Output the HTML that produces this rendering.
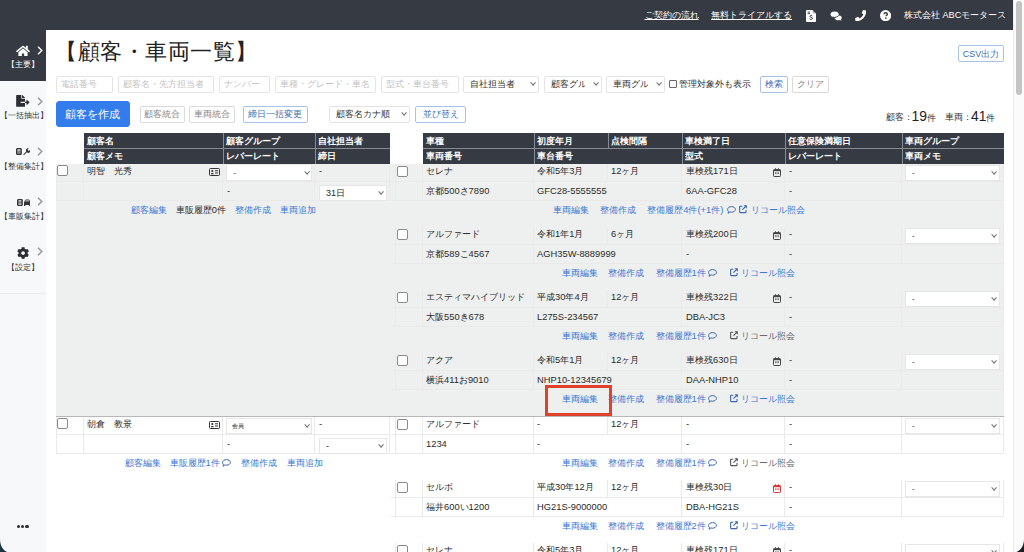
<!DOCTYPE html><html><head><meta charset="utf-8"><style>
*{margin:0;padding:0;box-sizing:border-box}
html,body{width:1024px;height:552px;overflow:hidden;background:#fff}
body{font-family:"Liberation Sans",sans-serif;color:#2a2a2a;position:relative}
.ab{position:absolute}
.t{position:absolute;white-space:nowrap;font-size:9px;line-height:12px;transform:translateY(-6px)}
.c{transform:translate(-50%,-6px)}
.hd{color:#fff;font-weight:bold;font-size:9.2px}
.l{font-size:1.04em}
.lk{color:#3a78d4}
.gr{color:#666}
.cb{position:absolute;width:11px;height:11px;border:1px solid #8a8a8a;border-radius:2px;background:#fff}
.sel{position:absolute;background:#fff;border:1px solid #e6e6e6;}
.sel span{position:absolute;left:6px;right:16px;overflow:hidden;top:50%;transform:translateY(-50%);font-size:9px;line-height:12px;white-space:nowrap}
.sel i{position:absolute;right:2.6px;top:50%;width:4.2px;height:4.2px;border-right:.9px solid #707070;border-bottom:.9px solid #707070;transform:translateY(-75%) rotate(45deg)}
.btn{position:absolute;border:1px solid #dadada;border-radius:2px;background:#fff;font-size:9px;line-height:12px;color:#888;display:flex;align-items:center;justify-content:center;white-space:nowrap}
.bb{border-color:#a9c3e6;color:#3d6fb5}
.inp{position:absolute;border:1px solid #e4e4e4;border-radius:2px;background:#fff;font-size:9px;color:#c4c4c4;padding-left:4px;display:flex;align-items:center;white-space:nowrap;overflow:hidden}
</style></head><body>
<div class="ab" style="left:0px;top:0px;width:1012.5px;height:30px;background:#363a42"></div>
<div class="t" style="left:644.5px;top:15px;color:#fff;font-size:9px"><u>ご契約の流れ</u></div>
<div class="t" style="left:711px;top:15px;color:#fff;font-size:9px"><u>無料トライアルする</u></div>
<div class="t" style="left:904px;top:15px;color:#fff;font-size:8.8px">株式会社 <span class="l">ABC</span>モータース</div>
<svg class="ab" style="left:806px;top:9.5px" width="10" height="12" viewBox="0 0 10 12"><path d="M0 .8A.8.8 0 0 1 .8 0H6.5L10 3.5v7.7a.8.8 0 0 1-.8.8H.8a.8.8 0 0 1-.8-.8z" fill="#fff"/><path d="M6.5 0v3.5H10" fill="#363a42" opacity=".35"/><rect x="1.6" y="1.6" width="2.4" height=".9" fill="#363a42"/><rect x="1.6" y="3.2" width="2.4" height=".9" fill="#363a42"/><path d="M6.4 6.1c-.3-.4-.8-.6-1.3-.6-.7 0-1.2.4-1.2.9 0 1.1 2.6.7 2.6 1.9 0 .6-.6 1-1.4 1-.6 0-1.1-.2-1.5-.6M5 4.8v.8m0 3.7v.8" fill="none" stroke="#363a42" stroke-width=".9"/></svg>
<svg class="ab" style="left:830px;top:10.5px" width="12" height="10" viewBox="0 0 12 10"><path d="M8.2 4.2c2 0 3.6 1.1 3.6 2.5 0 .6-.3 1.2-.8 1.6l.5 1.5-1.8-.8c-.5.2-1 .3-1.5.3-2 0-3.6-1.1-3.6-2.6s1.6-2.5 3.6-2.5z" fill="#fff"/><path d="M4.6 0C7.1 0 9.2 1.4 9.2 3.2S7.1 6.4 4.6 6.4c-.6 0-1.2-.1-1.7-.3L.7 7.1l.7-1.7C.5 4.8 0 4 0 3.2 0 1.4 2.1 0 4.6 0z" fill="#fff" stroke="#363a42" stroke-width="1"/></svg>
<svg class="ab" style="left:854.5px;top:9.7px" width="11.3" height="11.3" viewBox="0 0 512 512"><path d="M493.4 24.6l-104-24c-11.3-2.6-22.9 3.3-27.5 13.9l-48 112c-4.2 9.8-1.4 21.3 6.9 28l60.6 49.6c-36 76.7-98.9 140.5-177.2 177.2l-49.6-60.6c-6.8-8.300-18.2-11.1-28-6.9l-112 48C3.9 366.5-2 378.1.6 389.4l24 104C27.1 504.2 36.7 512 48 512c256.1 0 464-207.5 464-464 0-11.2-7.7-20.9-18.6-23.4z" fill="#fff"/></svg>
<svg class="ab" style="left:879.8px;top:10.2px" width="11.2" height="11.2" viewBox="0 0 12 12"><circle cx="6" cy="6" r="6" fill="#fff"/><path d="M4.3 4.6c0-1 .8-1.6 1.8-1.6s1.8.6 1.8 1.5c0 1.2-1.5 1.2-1.5 2.3" fill="none" stroke="#363a42" stroke-width="1.5"/><circle cx="6.3" cy="8.7" r=".9" fill="#363a42"/></svg>
<div class="ab" style="left:1012.5px;top:0px;width:11.5px;height:552px;background:#fbfbfb;border-left:1px solid #efefef"></div>
<div class="ab" style="left:1015.7px;top:1.3px;width:6.6px;height:93.7px;background:#c4c4c4;border-radius:3.3px"></div>
<div class="ab" style="left:0px;top:30px;width:46px;height:522px;background:#f7f8fa"></div>
<div class="ab" style="left:0px;top:292.5px;width:46px;height:1px;background:#e9eaec"></div>
<div class="ab" style="left:0px;top:30px;width:46px;height:51px;background:#363a42"></div>
<svg class="ab" style="left:16px;top:44.5px" width="14" height="11.5" viewBox="0 0 576 480"><path d="M280.37 148.26L96 300.11V464a16 16 0 0 0 16 16l112.06-.29a16 16 0 0 0 15.920-16V368a16 16 0 0 1 16-16h64a16 16 0 0 1 16 16v95.64a16 16 0 0 0 16 16.050L464 480a16 16 0 0 0 16-16V300L295.67 148.26a12.19 12.19 0 0 0-15.300 0zM571.6 251.47L488 182.56V44.05a12 12 0 0 0-12-12h-56a12 12 0 0 0-12 12v72.61L318.47 43a48 48 0 0 0-61 0L4.34 251.47a12 12 0 0 0-1.6 16.9l25.5 31A12 12 0 0 0 45.15 301l235.22-193.74a12.19 12.19 0 0 1 15.3 0L530.9 301a12 12 0 0 0 16.9-1.6l25.5-31a12 12 0 0 0-1.7-16.93z" fill="#fff"/></svg>
<svg class="ab" style="left:37px;top:45.5px" width="6" height="9" viewBox="0 0 6 9"><path d="M1 .7 4.8 4.5 1 8.3" stroke="#fff" stroke-width="1.4" fill="none"/></svg>
<div class="t" style="left:7px;top:64px;color:#fff;font-size:8.4px">【主要】</div>
<svg class="ab" style="left:16.3px;top:95px" width="13.6" height="11.8" viewBox="0 0 576 512"><path d="M384 121.9c0-6.3-2.5-12.4-7-16.9L279.1 7c-4.5-4.5-10.6-7-17-7H256v128h128zM571 308l-95.7-96.4c-10.1-10.1-27.4-3-27.4 11.3V288h-64v64h64v65.2c0 14.3 17.3 21.4 27.4 11.3L571 332c6.6-6.6 6.6-17.4 0-24zm-379 28v-32c0-8.8 7.2-16 16-16h176V160H248c-13.2 0-24-10.8-24-24V0H24C10.7 0 0 10.7 0 24v464c0 13.3 10.7 24 24 24h336c13.3 0 24-10.7 24-24V352H208c-8.8 0-16-7.2-16-16z" fill="#2b2e33"/></svg>
<svg class="ab" style="left:37px;top:96.5px" width="6" height="9" viewBox="0 0 6 9"><path d="M1 .7 4.8 4.5 1 8.3" stroke="#999" stroke-width="1.5" fill="none"/></svg>
<div class="t" style="left:0px;top:114.5px;font-size:8.4px;color:#333">【一括抽出】</div>
<svg class="ab" style="left:16.3px;top:148px" width="13.6" height="7" viewBox="0 0 13.6 7"><rect x=".6" y=".6" width="4.6" height="5.8" rx=".7" fill="#888" stroke="#333" stroke-width="1.2"/><rect x="1.6" y="1.4" width="2.6" height="1.2" fill="#ddd"/><path d="M7.2 6.6 10.3 3.4A1.9 1.9 0 0 1 12.7.6l-1.1 1.1.5.9.9.4 1-1A1.9 1.9 0 0 1 11 4.3L8 7z" fill="#333"/></svg>
<svg class="ab" style="left:37px;top:146.5px" width="6" height="9" viewBox="0 0 6 9"><path d="M1 .7 4.8 4.5 1 8.3" stroke="#999" stroke-width="1.5" fill="none"/></svg>
<div class="t" style="left:0px;top:166px;font-size:8.4px;color:#333">【整備集計】</div>
<svg class="ab" style="left:16.5px;top:198.8px" width="13.5" height="7" viewBox="0 0 13.5 7"><rect x=".6" y=".6" width="4.6" height="5.8" rx=".7" fill="#777" stroke="#333" stroke-width="1.2"/><rect x="1.6" y="1.4" width="2.6" height="1" fill="#eee"/><rect x="1.6" y="4.6" width="2.6" height="1" fill="#eee"/><path d="M7 7V3.6L8 1.2C8.2.6 8.6.4 9.2.4h2.3c.6 0 1 .2 1.2.8l.8 2.4V7h-1.4V6H8.4v1z" fill="#333"/><rect x="8.4" y="1.3" width="3.8" height="1.1" fill="#ccc"/></svg>
<svg class="ab" style="left:37px;top:196.5px" width="6" height="9" viewBox="0 0 6 9"><path d="M1 .7 4.8 4.5 1 8.3" stroke="#999" stroke-width="1.5" fill="none"/></svg>
<div class="t" style="left:0px;top:216px;font-size:8.4px;color:#333">【車販集計】</div>
<svg class="ab" style="left:16.8px;top:246.8px" width="12.2" height="12.2" viewBox="0 0 512 512"><path d="M487.4 315.7l-42.6-24.6c4.3-23.2 4.3-47 0-70.2l42.6-24.6c4.9-2.8 7.1-8.6 5.5-14-11.1-35.6-30-67.8-54.7-94.6-3.8-4.1-10-5.1-14.8-2.3L380.8 110c-17.9-15.4-38.5-27.3-60.8-35.1V25.8c0-5.6-3.9-10.5-9.4-11.7-36.7-8.2-74.3-7.8-109.2 0-5.5 1.2-9.4 6.1-9.4 11.7V75c-22.2 7.9-42.8 19.8-60.8 35.1L88.7 85.5c-4.9-2.8-11-1.9-14.8 2.3-24.7 26.7-43.6 58.9-54.7 94.6-1.7 5.4.6 11.2 5.5 14L67.3 221c-4.3 23.2-4.3 47 0 70.2l-42.6 24.6c-4.9 2.8-7.1 8.6-5.5 14 11.1 35.6 30 67.8 54.7 94.6 3.8 4.1 10 5.1 14.8 2.3l42.6-24.6c17.9 15.4 38.5 27.3 60.8 35.1v49.2c0 5.6 3.9 10.5 9.4 11.7 36.7 8.2 74.3 7.8 109.2 0 5.5-1.2 9.4-6.1 9.4-11.7v-49.2c22.2-7.9 42.8-19.8 60.8-35.1l42.6 24.6c4.9 2.8 11 1.9 14.8-2.3 24.7-26.7 43.6-58.9 54.7-94.6 1.5-5.5-.7-11.3-5.6-14.1zM256 336c-44.1 0-80-35.9-80-80s35.9-80 80-80 80 35.9 80 80-35.9 80-80 80z" fill="#2b2e33"/></svg>
<svg class="ab" style="left:37px;top:247px" width="6" height="9" viewBox="0 0 6 9"><path d="M1 .7 4.8 4.5 1 8.3" stroke="#999" stroke-width="1.5" fill="none"/></svg>
<div class="t" style="left:7px;top:267px;font-size:8.4px;color:#333">【設定】</div>
<div class="ab" style="left:16.8px;top:524.7px;width:3.4px;height:3.4px;background:#2b2e33;border-radius:50%"></div>
<div class="ab" style="left:21.1px;top:524.7px;width:3.4px;height:3.4px;background:#2b2e33;border-radius:50%"></div>
<div class="ab" style="left:25.4px;top:524.7px;width:3.4px;height:3.4px;background:#2b2e33;border-radius:50%"></div>
<svg class="ab" style="left:0;top:539px" width="8" height="13" viewBox="0 0 8 13"><path d="M0 0C0 6 2.5 11 7 13H0z" fill="#1f3640"/></svg>
<svg class="ab" style="left:1014px;top:539px" width="10" height="13" viewBox="0 0 10 13"><path d="M10 0C10 6 7.5 11 2.5 13H10z" fill="#1b1e22"/></svg>
<div class="t" style="left:55px;top:52px;letter-spacing:0.55px;font-size:22.4px;line-height:26px;transform:translateY(-13px);color:#222">【顧客・車両一覧】</div>
<div class="btn bb" style="left:958px;top:45px;width:46px;height:17px;font-size:9px">CSV出力</div>
<div class="inp" style="left:56px;top:75.5px;width:57px;height:17px">電話番号</div>
<div class="inp" style="left:118px;top:75.5px;width:96px;height:17px">顧客名・先方担当者</div>
<div class="inp" style="left:219px;top:75.5px;width:51px;height:17px">ナンバー</div>
<div class="inp" style="left:274.5px;top:75.5px;width:101.5px;height:17px">車種・グレード・車名</div>
<div class="inp" style="left:381px;top:75.5px;width:78px;height:17px">型式・車台番号</div>
<div class="sel" style="left:462.5px;top:75.5px;width:76px;height:17px;border-color:#e4e4e4;border-radius:2px"><span style="color:#333">自社担当者</span><i></i></div>
<div class="sel" style="left:543.5px;top:75.5px;width:58px;height:17px;border-color:#e4e4e4;border-radius:2px"><span style="color:#333">顧客グループ</span><i></i></div>
<div class="sel" style="left:606px;top:75.5px;width:58.5px;height:17px;border-color:#e4e4e4;border-radius:2px"><span style="color:#333">車両グループ</span><i></i></div>
<div class="ab" style="left:669px;top:79.5px;width:8px;height:8px;border:1px solid #666;border-radius:1px;background:#fff"></div>
<div class="t" style="left:679px;top:84px;color:#333">管理対象外も表示</div>
<div class="btn bb" style="left:760px;top:75.5px;width:28px;height:17px">検索</div>
<div class="btn" style="left:792px;top:75.5px;width:37px;height:17px">クリア</div>
<div class="btn" style="left:55.5px;top:101px;width:74.5px;height:26px;background:#337cec;border-color:#337cec;color:#fff;font-size:10.8px;border-radius:3px">顧客を作成</div>
<div class="btn" style="left:139.5px;top:106px;width:45px;height:16.5px">顧客統合</div>
<div class="btn" style="left:189px;top:106px;width:45.5px;height:16.5px">車両統合</div>
<div class="btn bb" style="left:243px;top:106px;width:64.5px;height:16.5px">締日一括変更</div>
<div class="sel" style="left:329px;top:106px;width:81px;height:16.5px;border-color:#e4e4e4;border-radius:2px"><span style="color:#333">顧客名カナ順</span><i></i></div>
<div class="btn bb" style="left:415px;top:106px;width:51px;height:16.5px">並び替え</div>
<div class="t" style="left:885.5px;top:117px;color:#333">顧客：</div>
<div class="t" style="left:911.5px;top:115.5px;color:#222;font-size:13.3px;line-height:16px;transform:translateY(-8px)"><span class="l">19</span></div>
<div class="t" style="left:926.5px;top:117.5px;color:#333;font-size:8.5px">件</div>
<div class="t" style="left:945px;top:117px;color:#333">車両：</div>
<div class="t" style="left:971px;top:115.5px;color:#222;font-size:13.3px;line-height:16px;transform:translateY(-8px)"><span class="l">41</span></div>
<div class="t" style="left:985.5px;top:117.5px;color:#333;font-size:8.5px">件</div>
<div class="ab" style="left:84px;top:133px;width:306px;height:30.5px;background:#363a42"></div>
<div class="ab" style="left:423px;top:133px;width:580.5px;height:30.5px;background:#363a42"></div>
<div class="ab" style="left:84px;top:148px;width:306px;height:1px;background:#878b92"></div>
<div class="ab" style="left:423px;top:148px;width:580.5px;height:1px;background:#878b92"></div>
<div class="ab" style="left:222.5px;top:133px;width:1px;height:30.5px;background:#878b92"></div>
<div class="ab" style="left:315px;top:133px;width:1px;height:30.5px;background:#878b92"></div>
<div class="ab" style="left:534px;top:133px;width:1px;height:30.5px;background:#878b92"></div>
<div class="ab" style="left:682px;top:133px;width:1px;height:30.5px;background:#878b92"></div>
<div class="ab" style="left:785px;top:133px;width:1px;height:30.5px;background:#878b92"></div>
<div class="ab" style="left:901.5px;top:133px;width:1px;height:30.5px;background:#878b92"></div>
<div class="ab" style="left:608px;top:133px;width:1px;height:15px;background:#878b92"></div>
<div class="t hd" style="left:87px;top:141px;">顧客名</div>
<div class="t hd" style="left:225.5px;top:141px;">顧客グループ</div>
<div class="t hd" style="left:318px;top:141px;">自社担当者</div>
<div class="t hd" style="left:87px;top:156px;">顧客メモ</div>
<div class="t hd" style="left:225.5px;top:156px;">レバーレート</div>
<div class="t hd" style="left:318px;top:156px;">締日</div>
<div class="t hd" style="left:426px;top:141px;">車種</div>
<div class="t hd" style="left:537px;top:141px;">初度年月</div>
<div class="t hd" style="left:611px;top:141px;">点検間隔</div>
<div class="t hd" style="left:685px;top:141px;">車検満了日</div>
<div class="t hd" style="left:788px;top:141px;">任意保険満期日</div>
<div class="t hd" style="left:904.5px;top:141px;">車両グループ</div>
<div class="t hd" style="left:426px;top:156px;">車両番号</div>
<div class="t hd" style="left:537px;top:156px;">車台番号</div>
<div class="t hd" style="left:685px;top:156px;">型式</div>
<div class="t hd" style="left:788px;top:156px;">レバーレート</div>
<div class="t hd" style="left:904.5px;top:156px;">車両メモ</div>
<div class="ab" style="left:56px;top:163.5px;width:947.5px;height:252.1px;background:#eef0ef"></div>
<div class="ab" style="left:56px;top:163.5px;width:28px;height:18.7px;border:1px solid #e9eae9;border-width:0 1px 1px 1px"></div>
<div class="ab" style="left:56px;top:182.2px;width:28px;height:19.2px;border:1px solid #e9eae9;border-width:0 1px 1px 1px"></div>
<div class="ab" style="left:84px;top:163.5px;width:138.5px;height:18.7px;border:1px solid #e9eae9;border-width:0 1px 1px 0px"></div>
<div class="ab" style="left:84px;top:182.2px;width:138.5px;height:19.2px;border:1px solid #e9eae9;border-width:0 1px 1px 0px"></div>
<div class="ab" style="left:222.5px;top:163.5px;width:92.5px;height:18.7px;border:1px solid #e9eae9;border-width:0 1px 1px 0px"></div>
<div class="ab" style="left:222.5px;top:182.2px;width:92.5px;height:19.2px;border:1px solid #e9eae9;border-width:0 1px 1px 0px"></div>
<div class="ab" style="left:315px;top:163.5px;width:75px;height:18.7px;border:1px solid #e9eae9;border-width:0 1px 1px 0px"></div>
<div class="ab" style="left:315px;top:182.2px;width:75px;height:19.2px;border:1px solid #e9eae9;border-width:0 1px 1px 0px"></div>
<div class="cb" style="left:57px;top:164.5px"></div>
<div class="t" style="left:87px;top:171.2px;">明智　光秀</div>
<svg class="ab" style="left:208.8px;top:167.7px" width="11" height="8" viewBox="0 0 11 8"><rect x=".5" y=".5" width="10" height="7" rx="1" fill="none" stroke="#333"/><circle cx="3.3" cy="3" r="1.1" fill="#333"/><path d="M1.8 6.2a1.5 1.5 0 0 1 3 0z" fill="#333"/><rect x="6" y="2.3" width="3" height="1" fill="#333"/><rect x="6" y="4.5" width="3" height="1" fill="#333"/></svg>
<div class="sel" style="left:226.3px;top:164.3px;width:86px;height:17px"><span style="color:#666">-</span><i></i></div>
<div class="t" style="left:319px;top:171.2px;"><span class="l">-</span></div>
<div class="t" style="left:227px;top:191.3px;"><span class="l">-</span></div>
<div class="sel" style="left:319px;top:184.8px;width:68px;height:16.5px"><span style="">31日</span><i></i></div>
<div class="t lk" style="left:131px;top:209.7px;">顧客編集</div>
<div class="t" style="left:175.8px;top:209.7px;">車販履歴<span class="l">0</span>件</div>
<div class="t lk" style="left:234.6px;top:209.7px;">整備作成</div>
<div class="t lk" style="left:279.7px;top:209.7px;">車両追加</div>
<div class="ab" style="left:391px;top:163.5px;width:5px;height:18.7px;border:1px solid #e9eae9;border-width:0 1px 1px 0"></div>
<div class="ab" style="left:396px;top:163.5px;width:27px;height:18.7px;border:1px solid #e9eae9;border-width:0 1px 1px 0"></div>
<div class="ab" style="left:423px;top:163.5px;width:111px;height:18.7px;border:1px solid #e9eae9;border-width:0 1px 1px 0"></div>
<div class="ab" style="left:534px;top:163.5px;width:74px;height:18.7px;border:1px solid #e9eae9;border-width:0 1px 1px 0"></div>
<div class="ab" style="left:608px;top:163.5px;width:74px;height:18.7px;border:1px solid #e9eae9;border-width:0 1px 1px 0"></div>
<div class="ab" style="left:682px;top:163.5px;width:103px;height:18.7px;border:1px solid #e9eae9;border-width:0 1px 1px 0"></div>
<div class="ab" style="left:785px;top:163.5px;width:116.5px;height:18.7px;border:1px solid #e9eae9;border-width:0 1px 1px 0"></div>
<div class="ab" style="left:901.5px;top:163.5px;width:102px;height:18.7px;border:1px solid #e9eae9;border-width:0 1px 1px 0"></div>
<div class="ab" style="left:391px;top:182.2px;width:5px;height:19.2px;border:1px solid #e9eae9;border-width:0 1px 1px 0"></div>
<div class="ab" style="left:396px;top:182.2px;width:27px;height:19.2px;border:1px solid #e9eae9;border-width:0 1px 1px 0"></div>
<div class="ab" style="left:423px;top:182.2px;width:111px;height:19.2px;border:1px solid #e9eae9;border-width:0 1px 1px 0"></div>
<div class="ab" style="left:534px;top:182.2px;width:148px;height:19.2px;border:1px solid #e9eae9;border-width:0 1px 1px 0"></div>
<div class="ab" style="left:682px;top:182.2px;width:103px;height:19.2px;border:1px solid #e9eae9;border-width:0 1px 1px 0"></div>
<div class="ab" style="left:785px;top:182.2px;width:116.5px;height:19.2px;border:1px solid #e9eae9;border-width:0 1px 1px 0"></div>
<div class="ab" style="left:901.5px;top:182.2px;width:102px;height:19.2px;border:1px solid #e9eae9;border-width:0 1px 1px 0"></div>
<div class="cb" style="left:397px;top:166.0px"></div>
<div class="t" style="left:426px;top:171.2px;">セレナ</div>
<div class="t" style="left:537px;top:171.2px;">令和<span class="l">5</span>年<span class="l">3</span>月</div>
<div class="t" style="left:611px;top:171.2px;"><span class="l">12</span>ヶ月</div>
<div class="t" style="left:686px;top:171.2px;">車検残<span class="l">171</span>日</div>
<svg class="ab" style="left:773px;top:167.8px" width="8" height="9" viewBox="0 0 8 9"><path d="M1.3 1.6h5.4a.8.8 0 0 1 .8.8v5.3a.8.8 0 0 1-.8.8H1.3a.8.8 0 0 1-.8-.8V2.4a.8.8 0 0 1 .8-.8z" fill="none" stroke="#444" stroke-width="1"/><rect x=".5" y="1.6" width="7" height="1.6" fill="#444"/><rect x="2" y=".3" width="1" height="1.8" fill="#444"/><rect x="5" y=".3" width="1" height="1.8" fill="#444"/><rect x="2" y="4.3" width="1.6" height="1.8" fill="#444" opacity=".7"/><rect x="4.4" y="4.3" width="1.6" height="1.8" fill="#444" opacity=".7"/></svg>
<div class="t" style="left:789px;top:171.2px;"><span class="l">-</span></div>
<div class="sel" style="left:905px;top:164.5px;width:95px;height:16.5px"><span style="font-size:8px">-</span><i></i></div>
<div class="t" style="left:426px;top:191.3px;">京都<span class="l">500</span>さ<span class="l">7890</span></div>
<div class="t" style="left:537px;top:191.3px;"><span class="l">GFC28-5555555</span></div>
<div class="t" style="left:686px;top:191.3px;"><span class="l">6AA-GFC28</span></div>
<div class="t" style="left:789px;top:191.3px;"><span class="l">-</span></div>
<div class="t lk" style="left:553px;top:209.7px;">車両編集</div>
<div class="t lk" style="left:599.6px;top:209.7px;">整備作成</div>
<div class="t lk" style="left:647.2px;top:209.7px;">整備履歴<span class="l">4</span>件<span class="l">(+1</span>件<span class="l">)</span></div>
<svg class="ab" style="left:726.5px;top:206.3px" width="9" height="8" viewBox="0 0 9 8"><path d="M4.5 .6C6.6.6 8.4 1.8 8.4 3.4S6.6 6.2 4.5 6.2c-.6 0-1.1-.1-1.6-.3L1 7.3l.5-1.6C.9 5.1.6 4.3.6 3.4.6 1.8 2.4.6 4.5.6z" fill="none" stroke="#3d66ad" stroke-width="1"/></svg>
<svg class="ab" style="left:739px;top:205.4px" width="8.2" height="8.2" viewBox="0 0 9 9"><path d="M3.6 1.4H1.3a.6.6 0 0 0-.6.6v5.8c0 .3.3.6.6.6h5.8c.3 0 .6-.3.6-.6V5.4" fill="none" stroke="#3d66ad" stroke-width="1.2"/><path d="M3.8 5.2 8 1" fill="none" stroke="#3d66ad" stroke-width="1.2"/><path d="M5 .4h3.6V4z" fill="#3d66ad"/></svg>
<div class="t lk" style="left:750.5px;top:209.7px;">リコール照会</div>
<div class="ab" style="left:391px;top:226.5px;width:5px;height:18.7px;border:1px solid #e9eae9;border-width:0 1px 1px 0"></div>
<div class="ab" style="left:396px;top:226.5px;width:27px;height:18.7px;border:1px solid #e9eae9;border-width:0 1px 1px 0"></div>
<div class="ab" style="left:423px;top:226.5px;width:111px;height:18.7px;border:1px solid #e9eae9;border-width:0 1px 1px 0"></div>
<div class="ab" style="left:534px;top:226.5px;width:74px;height:18.7px;border:1px solid #e9eae9;border-width:0 1px 1px 0"></div>
<div class="ab" style="left:608px;top:226.5px;width:74px;height:18.7px;border:1px solid #e9eae9;border-width:0 1px 1px 0"></div>
<div class="ab" style="left:682px;top:226.5px;width:103px;height:18.7px;border:1px solid #e9eae9;border-width:0 1px 1px 0"></div>
<div class="ab" style="left:785px;top:226.5px;width:116.5px;height:18.7px;border:1px solid #e9eae9;border-width:0 1px 1px 0"></div>
<div class="ab" style="left:901.5px;top:226.5px;width:102px;height:18.7px;border:1px solid #e9eae9;border-width:0 1px 1px 0"></div>
<div class="ab" style="left:391px;top:245.2px;width:5px;height:19.2px;border:1px solid #e9eae9;border-width:0 1px 1px 0"></div>
<div class="ab" style="left:396px;top:245.2px;width:27px;height:19.2px;border:1px solid #e9eae9;border-width:0 1px 1px 0"></div>
<div class="ab" style="left:423px;top:245.2px;width:111px;height:19.2px;border:1px solid #e9eae9;border-width:0 1px 1px 0"></div>
<div class="ab" style="left:534px;top:245.2px;width:148px;height:19.2px;border:1px solid #e9eae9;border-width:0 1px 1px 0"></div>
<div class="ab" style="left:682px;top:245.2px;width:103px;height:19.2px;border:1px solid #e9eae9;border-width:0 1px 1px 0"></div>
<div class="ab" style="left:785px;top:245.2px;width:116.5px;height:19.2px;border:1px solid #e9eae9;border-width:0 1px 1px 0"></div>
<div class="ab" style="left:901.5px;top:245.2px;width:102px;height:19.2px;border:1px solid #e9eae9;border-width:0 1px 1px 0"></div>
<div class="cb" style="left:397px;top:229.0px"></div>
<div class="t" style="left:426px;top:234.2px;">アルファード</div>
<div class="t" style="left:537px;top:234.2px;">令和<span class="l">1</span>年<span class="l">1</span>月</div>
<div class="t" style="left:611px;top:234.2px;"><span class="l">6</span>ヶ月</div>
<div class="t" style="left:686px;top:234.2px;">車検残<span class="l">200</span>日</div>
<svg class="ab" style="left:773px;top:230.8px" width="8" height="9" viewBox="0 0 8 9"><path d="M1.3 1.6h5.4a.8.8 0 0 1 .8.8v5.3a.8.8 0 0 1-.8.8H1.3a.8.8 0 0 1-.8-.8V2.4a.8.8 0 0 1 .8-.8z" fill="none" stroke="#444" stroke-width="1"/><rect x=".5" y="1.6" width="7" height="1.6" fill="#444"/><rect x="2" y=".3" width="1" height="1.8" fill="#444"/><rect x="5" y=".3" width="1" height="1.8" fill="#444"/><rect x="2" y="4.3" width="1.6" height="1.8" fill="#444" opacity=".7"/><rect x="4.4" y="4.3" width="1.6" height="1.8" fill="#444" opacity=".7"/></svg>
<div class="t" style="left:789px;top:234.2px;"><span class="l">-</span></div>
<div class="sel" style="left:905px;top:227.5px;width:95px;height:16.5px"><span style="font-size:8px">-</span><i></i></div>
<div class="t" style="left:426px;top:254.3px;">京都<span class="l">589</span>こ<span class="l">4567</span></div>
<div class="t" style="left:537px;top:254.3px;"><span class="l">AGH35W-8889999</span></div>
<div class="t" style="left:686px;top:254.3px;"><span class="l">-</span></div>
<div class="t" style="left:789px;top:254.3px;"><span class="l">-</span></div>
<div class="t lk" style="left:562.4px;top:272.7px;">車両編集</div>
<div class="t lk" style="left:607.7px;top:272.7px;">整備作成</div>
<div class="t lk" style="left:655.5px;top:272.7px;">整備履歴<span class="l">1</span>件</div>
<svg class="ab" style="left:708px;top:269.3px" width="9" height="8" viewBox="0 0 9 8"><path d="M4.5 .6C6.6.6 8.4 1.8 8.4 3.4S6.6 6.2 4.5 6.2c-.6 0-1.1-.1-1.6-.3L1 7.3l.5-1.6C.9 5.1.6 4.3.6 3.4.6 1.8 2.4.6 4.5.6z" fill="none" stroke="#3d66ad" stroke-width="1"/></svg>
<svg class="ab" style="left:729.7px;top:268.4px" width="8.2" height="8.2" viewBox="0 0 9 9"><path d="M3.6 1.4H1.3a.6.6 0 0 0-.6.6v5.8c0 .3.3.6.6.6h5.8c.3 0 .6-.3.6-.6V5.4" fill="none" stroke="#3d66ad" stroke-width="1.2"/><path d="M3.8 5.2 8 1" fill="none" stroke="#3d66ad" stroke-width="1.2"/><path d="M5 .4h3.6V4z" fill="#3d66ad"/></svg>
<div class="t lk" style="left:741px;top:272.7px;">リコール照会</div>
<div class="ab" style="left:391px;top:289.5px;width:5px;height:18.7px;border:1px solid #e9eae9;border-width:0 1px 1px 0"></div>
<div class="ab" style="left:396px;top:289.5px;width:27px;height:18.7px;border:1px solid #e9eae9;border-width:0 1px 1px 0"></div>
<div class="ab" style="left:423px;top:289.5px;width:111px;height:18.7px;border:1px solid #e9eae9;border-width:0 1px 1px 0"></div>
<div class="ab" style="left:534px;top:289.5px;width:74px;height:18.7px;border:1px solid #e9eae9;border-width:0 1px 1px 0"></div>
<div class="ab" style="left:608px;top:289.5px;width:74px;height:18.7px;border:1px solid #e9eae9;border-width:0 1px 1px 0"></div>
<div class="ab" style="left:682px;top:289.5px;width:103px;height:18.7px;border:1px solid #e9eae9;border-width:0 1px 1px 0"></div>
<div class="ab" style="left:785px;top:289.5px;width:116.5px;height:18.7px;border:1px solid #e9eae9;border-width:0 1px 1px 0"></div>
<div class="ab" style="left:901.5px;top:289.5px;width:102px;height:18.7px;border:1px solid #e9eae9;border-width:0 1px 1px 0"></div>
<div class="ab" style="left:391px;top:308.2px;width:5px;height:19.2px;border:1px solid #e9eae9;border-width:0 1px 1px 0"></div>
<div class="ab" style="left:396px;top:308.2px;width:27px;height:19.2px;border:1px solid #e9eae9;border-width:0 1px 1px 0"></div>
<div class="ab" style="left:423px;top:308.2px;width:111px;height:19.2px;border:1px solid #e9eae9;border-width:0 1px 1px 0"></div>
<div class="ab" style="left:534px;top:308.2px;width:148px;height:19.2px;border:1px solid #e9eae9;border-width:0 1px 1px 0"></div>
<div class="ab" style="left:682px;top:308.2px;width:103px;height:19.2px;border:1px solid #e9eae9;border-width:0 1px 1px 0"></div>
<div class="ab" style="left:785px;top:308.2px;width:116.5px;height:19.2px;border:1px solid #e9eae9;border-width:0 1px 1px 0"></div>
<div class="ab" style="left:901.5px;top:308.2px;width:102px;height:19.2px;border:1px solid #e9eae9;border-width:0 1px 1px 0"></div>
<div class="cb" style="left:397px;top:292.0px"></div>
<div class="t" style="left:426px;top:297.2px;">エスティマハイブリッド</div>
<div class="t" style="left:537px;top:297.2px;">平成<span class="l">30</span>年<span class="l">4</span>月</div>
<div class="t" style="left:611px;top:297.2px;"><span class="l">12</span>ヶ月</div>
<div class="t" style="left:686px;top:297.2px;">車検残<span class="l">322</span>日</div>
<svg class="ab" style="left:773px;top:293.8px" width="8" height="9" viewBox="0 0 8 9"><path d="M1.3 1.6h5.4a.8.8 0 0 1 .8.8v5.3a.8.8 0 0 1-.8.8H1.3a.8.8 0 0 1-.8-.8V2.4a.8.8 0 0 1 .8-.8z" fill="none" stroke="#444" stroke-width="1"/><rect x=".5" y="1.6" width="7" height="1.6" fill="#444"/><rect x="2" y=".3" width="1" height="1.8" fill="#444"/><rect x="5" y=".3" width="1" height="1.8" fill="#444"/><rect x="2" y="4.3" width="1.6" height="1.8" fill="#444" opacity=".7"/><rect x="4.4" y="4.3" width="1.6" height="1.8" fill="#444" opacity=".7"/></svg>
<div class="t" style="left:789px;top:297.2px;"><span class="l">-</span></div>
<div class="sel" style="left:905px;top:290.5px;width:95px;height:16.5px"><span style="font-size:8px">-</span><i></i></div>
<div class="t" style="left:426px;top:317.3px;">大阪<span class="l">550</span>き<span class="l">678</span></div>
<div class="t" style="left:537px;top:317.3px;"><span class="l">L275S-234567</span></div>
<div class="t" style="left:686px;top:317.3px;"><span class="l">DBA-JC3</span></div>
<div class="t" style="left:789px;top:317.3px;"><span class="l">-</span></div>
<div class="t lk" style="left:562.4px;top:335.7px;">車両編集</div>
<div class="t lk" style="left:607.7px;top:335.7px;">整備作成</div>
<div class="t lk" style="left:655.5px;top:335.7px;">整備履歴<span class="l">1</span>件</div>
<svg class="ab" style="left:708px;top:332.3px" width="9" height="8" viewBox="0 0 9 8"><path d="M4.5 .6C6.6.6 8.4 1.8 8.4 3.4S6.6 6.2 4.5 6.2c-.6 0-1.1-.1-1.6-.3L1 7.3l.5-1.6C.9 5.1.6 4.3.6 3.4.6 1.8 2.4.6 4.5.6z" fill="none" stroke="#3d66ad" stroke-width="1"/></svg>
<svg class="ab" style="left:729.7px;top:331.4px" width="8.2" height="8.2" viewBox="0 0 9 9"><path d="M3.6 1.4H1.3a.6.6 0 0 0-.6.6v5.8c0 .3.3.6.6.6h5.8c.3 0 .6-.3.6-.6V5.4" fill="none" stroke="#555" stroke-width="1.2"/><path d="M3.8 5.2 8 1" fill="none" stroke="#555" stroke-width="1.2"/><path d="M5 .4h3.6V4z" fill="#555"/></svg>
<div class="t gr" style="left:741px;top:335.7px;">リコール照会</div>
<div class="ab" style="left:391px;top:352.5px;width:5px;height:18.7px;border:1px solid #e9eae9;border-width:0 1px 1px 0"></div>
<div class="ab" style="left:396px;top:352.5px;width:27px;height:18.7px;border:1px solid #e9eae9;border-width:0 1px 1px 0"></div>
<div class="ab" style="left:423px;top:352.5px;width:111px;height:18.7px;border:1px solid #e9eae9;border-width:0 1px 1px 0"></div>
<div class="ab" style="left:534px;top:352.5px;width:74px;height:18.7px;border:1px solid #e9eae9;border-width:0 1px 1px 0"></div>
<div class="ab" style="left:608px;top:352.5px;width:74px;height:18.7px;border:1px solid #e9eae9;border-width:0 1px 1px 0"></div>
<div class="ab" style="left:682px;top:352.5px;width:103px;height:18.7px;border:1px solid #e9eae9;border-width:0 1px 1px 0"></div>
<div class="ab" style="left:785px;top:352.5px;width:116.5px;height:18.7px;border:1px solid #e9eae9;border-width:0 1px 1px 0"></div>
<div class="ab" style="left:901.5px;top:352.5px;width:102px;height:18.7px;border:1px solid #e9eae9;border-width:0 1px 1px 0"></div>
<div class="ab" style="left:391px;top:371.2px;width:5px;height:19.2px;border:1px solid #e9eae9;border-width:0 1px 1px 0"></div>
<div class="ab" style="left:396px;top:371.2px;width:27px;height:19.2px;border:1px solid #e9eae9;border-width:0 1px 1px 0"></div>
<div class="ab" style="left:423px;top:371.2px;width:111px;height:19.2px;border:1px solid #e9eae9;border-width:0 1px 1px 0"></div>
<div class="ab" style="left:534px;top:371.2px;width:148px;height:19.2px;border:1px solid #e9eae9;border-width:0 1px 1px 0"></div>
<div class="ab" style="left:682px;top:371.2px;width:103px;height:19.2px;border:1px solid #e9eae9;border-width:0 1px 1px 0"></div>
<div class="ab" style="left:785px;top:371.2px;width:116.5px;height:19.2px;border:1px solid #e9eae9;border-width:0 1px 1px 0"></div>
<div class="ab" style="left:901.5px;top:371.2px;width:102px;height:19.2px;border:1px solid #e9eae9;border-width:0 1px 1px 0"></div>
<div class="cb" style="left:397px;top:355.0px"></div>
<div class="t" style="left:426px;top:360.2px;">アクア</div>
<div class="t" style="left:537px;top:360.2px;">令和<span class="l">5</span>年<span class="l">1</span>月</div>
<div class="t" style="left:611px;top:360.2px;"><span class="l">12</span>ヶ月</div>
<div class="t" style="left:686px;top:360.2px;">車検残<span class="l">630</span>日</div>
<svg class="ab" style="left:773px;top:356.8px" width="8" height="9" viewBox="0 0 8 9"><path d="M1.3 1.6h5.4a.8.8 0 0 1 .8.8v5.3a.8.8 0 0 1-.8.8H1.3a.8.8 0 0 1-.8-.8V2.4a.8.8 0 0 1 .8-.8z" fill="none" stroke="#444" stroke-width="1"/><rect x=".5" y="1.6" width="7" height="1.6" fill="#444"/><rect x="2" y=".3" width="1" height="1.8" fill="#444"/><rect x="5" y=".3" width="1" height="1.8" fill="#444"/><rect x="2" y="4.3" width="1.6" height="1.8" fill="#444" opacity=".7"/><rect x="4.4" y="4.3" width="1.6" height="1.8" fill="#444" opacity=".7"/></svg>
<div class="t" style="left:789px;top:360.2px;"><span class="l">-</span></div>
<div class="sel" style="left:905px;top:353.5px;width:95px;height:16.5px"><span style="font-size:8px">-</span><i></i></div>
<div class="t" style="left:426px;top:380.3px;">横浜<span class="l">411</span>お<span class="l">9010</span></div>
<div class="t" style="left:537px;top:380.3px;"><span class="l">NHP10-12345679</span></div>
<div class="t" style="left:686px;top:380.3px;"><span class="l">DAA-NHP10</span></div>
<div class="t" style="left:789px;top:380.3px;"><span class="l">-</span></div>
<div class="t lk" style="left:562.4px;top:398.7px;">車両編集</div>
<div class="t lk" style="left:607.7px;top:398.7px;">整備作成</div>
<div class="t lk" style="left:655.5px;top:398.7px;">整備履歴<span class="l">1</span>件</div>
<svg class="ab" style="left:708px;top:395.3px" width="9" height="8" viewBox="0 0 9 8"><path d="M4.5 .6C6.6.6 8.4 1.8 8.4 3.4S6.6 6.2 4.5 6.2c-.6 0-1.1-.1-1.6-.3L1 7.3l.5-1.6C.9 5.1.6 4.3.6 3.4.6 1.8 2.4.6 4.5.6z" fill="none" stroke="#3d66ad" stroke-width="1"/></svg>
<svg class="ab" style="left:729.7px;top:394.4px" width="8.2" height="8.2" viewBox="0 0 9 9"><path d="M3.6 1.4H1.3a.6.6 0 0 0-.6.6v5.8c0 .3.3.6.6.6h5.8c.3 0 .6-.3.6-.6V5.4" fill="none" stroke="#3d66ad" stroke-width="1.2"/><path d="M3.8 5.2 8 1" fill="none" stroke="#3d66ad" stroke-width="1.2"/><path d="M5 .4h3.6V4z" fill="#3d66ad"/></svg>
<div class="t lk" style="left:741px;top:398.7px;">リコール照会</div>
<div class="ab" style="left:56px;top:415.6px;width:947.5px;height:1px;background:#b8b8b8"></div>
<div class="ab" style="left:56px;top:416.5px;width:28px;height:18.7px;border:1px solid #e9eae9;border-width:0 1px 1px 1px"></div>
<div class="ab" style="left:56px;top:435.2px;width:28px;height:19.2px;border:1px solid #e9eae9;border-width:0 1px 1px 1px"></div>
<div class="ab" style="left:84px;top:416.5px;width:138.5px;height:18.7px;border:1px solid #e9eae9;border-width:0 1px 1px 0px"></div>
<div class="ab" style="left:84px;top:435.2px;width:138.5px;height:19.2px;border:1px solid #e9eae9;border-width:0 1px 1px 0px"></div>
<div class="ab" style="left:222.5px;top:416.5px;width:92.5px;height:18.7px;border:1px solid #e9eae9;border-width:0 1px 1px 0px"></div>
<div class="ab" style="left:222.5px;top:435.2px;width:92.5px;height:19.2px;border:1px solid #e9eae9;border-width:0 1px 1px 0px"></div>
<div class="ab" style="left:315px;top:416.5px;width:75px;height:18.7px;border:1px solid #e9eae9;border-width:0 1px 1px 0px"></div>
<div class="ab" style="left:315px;top:435.2px;width:75px;height:19.2px;border:1px solid #e9eae9;border-width:0 1px 1px 0px"></div>
<div class="cb" style="left:57px;top:417.5px"></div>
<div class="t" style="left:87px;top:424.2px;">朝倉　教景</div>
<svg class="ab" style="left:208.8px;top:420.7px" width="11" height="8" viewBox="0 0 11 8"><rect x=".5" y=".5" width="10" height="7" rx="1" fill="none" stroke="#333"/><circle cx="3.3" cy="3" r="1.1" fill="#333"/><path d="M1.8 6.2a1.5 1.5 0 0 1 3 0z" fill="#333"/><rect x="6" y="2.3" width="3" height="1" fill="#333"/><rect x="6" y="4.5" width="3" height="1" fill="#333"/></svg>
<div class="sel" style="left:226.3px;top:417.5px;width:86px;height:16.8px"><span style="font-size:6.1px;left:5px">会員</span><i></i></div>
<div class="t" style="left:319px;top:424.2px;"><span class="l">-</span></div>
<div class="t" style="left:227px;top:444.3px;"><span class="l">-</span></div>
<div class="sel" style="left:319px;top:437.8px;width:68px;height:16.5px"><span style="">-</span><i></i></div>
<div class="t lk" style="left:124.5px;top:462.7px;">顧客編集</div>
<div class="t lk" style="left:169.6px;top:462.7px;">車販履歴<span class="l">1</span>件</div>
<svg class="ab" style="left:221.6px;top:459.3px" width="9" height="8" viewBox="0 0 9 8"><path d="M4.5 .6C6.6.6 8.4 1.8 8.4 3.4S6.6 6.2 4.5 6.2c-.6 0-1.1-.1-1.6-.3L1 7.3l.5-1.6C.9 5.1.6 4.3.6 3.4.6 1.8 2.4.6 4.5.6z" fill="none" stroke="#3d66ad" stroke-width="1"/></svg>
<div class="t lk" style="left:240.7px;top:462.7px;">整備作成</div>
<div class="t lk" style="left:286.5px;top:462.7px;">車両追加</div>
<div class="ab" style="left:391px;top:416.5px;width:5px;height:18.7px;border:1px solid #e9eae9;border-width:0 1px 1px 0"></div>
<div class="ab" style="left:396px;top:416.5px;width:27px;height:18.7px;border:1px solid #e9eae9;border-width:0 1px 1px 0"></div>
<div class="ab" style="left:423px;top:416.5px;width:111px;height:18.7px;border:1px solid #e9eae9;border-width:0 1px 1px 0"></div>
<div class="ab" style="left:534px;top:416.5px;width:74px;height:18.7px;border:1px solid #e9eae9;border-width:0 1px 1px 0"></div>
<div class="ab" style="left:608px;top:416.5px;width:74px;height:18.7px;border:1px solid #e9eae9;border-width:0 1px 1px 0"></div>
<div class="ab" style="left:682px;top:416.5px;width:103px;height:18.7px;border:1px solid #e9eae9;border-width:0 1px 1px 0"></div>
<div class="ab" style="left:785px;top:416.5px;width:116.5px;height:18.7px;border:1px solid #e9eae9;border-width:0 1px 1px 0"></div>
<div class="ab" style="left:901.5px;top:416.5px;width:102px;height:18.7px;border:1px solid #e9eae9;border-width:0 1px 1px 0"></div>
<div class="ab" style="left:391px;top:435.2px;width:5px;height:19.2px;border:1px solid #e9eae9;border-width:0 1px 1px 0"></div>
<div class="ab" style="left:396px;top:435.2px;width:27px;height:19.2px;border:1px solid #e9eae9;border-width:0 1px 1px 0"></div>
<div class="ab" style="left:423px;top:435.2px;width:111px;height:19.2px;border:1px solid #e9eae9;border-width:0 1px 1px 0"></div>
<div class="ab" style="left:534px;top:435.2px;width:148px;height:19.2px;border:1px solid #e9eae9;border-width:0 1px 1px 0"></div>
<div class="ab" style="left:682px;top:435.2px;width:103px;height:19.2px;border:1px solid #e9eae9;border-width:0 1px 1px 0"></div>
<div class="ab" style="left:785px;top:435.2px;width:116.5px;height:19.2px;border:1px solid #e9eae9;border-width:0 1px 1px 0"></div>
<div class="ab" style="left:901.5px;top:435.2px;width:102px;height:19.2px;border:1px solid #e9eae9;border-width:0 1px 1px 0"></div>
<div class="cb" style="left:397px;top:419.0px"></div>
<div class="t" style="left:426px;top:424.2px;">アルファード</div>
<div class="t" style="left:537px;top:424.2px;"><span class="l">-</span></div>
<div class="t" style="left:611px;top:424.2px;"><span class="l">12</span>ヶ月</div>
<div class="t" style="left:686px;top:424.2px;"><span class="l">-</span></div>
<div class="t" style="left:789px;top:424.2px;"><span class="l">-</span></div>
<div class="sel" style="left:905px;top:417.5px;width:95px;height:16.5px"><span style="font-size:8px">-</span><i></i></div>
<div class="t" style="left:426px;top:444.3px;"><span class="l">1234</span></div>
<div class="t" style="left:537px;top:444.3px;"><span class="l">-</span></div>
<div class="t" style="left:686px;top:444.3px;"><span class="l">-</span></div>
<div class="t" style="left:789px;top:444.3px;"><span class="l">-</span></div>
<div class="t lk" style="left:562.4px;top:462.7px;">車両編集</div>
<div class="t lk" style="left:607.7px;top:462.7px;">整備作成</div>
<div class="t lk" style="left:655.5px;top:462.7px;">整備履歴<span class="l">1</span>件</div>
<svg class="ab" style="left:708px;top:459.3px" width="9" height="8" viewBox="0 0 9 8"><path d="M4.5 .6C6.6.6 8.4 1.8 8.4 3.4S6.6 6.2 4.5 6.2c-.6 0-1.1-.1-1.6-.3L1 7.3l.5-1.6C.9 5.1.6 4.3.6 3.4.6 1.8 2.4.6 4.5.6z" fill="none" stroke="#3d66ad" stroke-width="1"/></svg>
<svg class="ab" style="left:729.7px;top:458.4px" width="8.2" height="8.2" viewBox="0 0 9 9"><path d="M3.6 1.4H1.3a.6.6 0 0 0-.6.6v5.8c0 .3.3.6.6.6h5.8c.3 0 .6-.3.6-.6V5.4" fill="none" stroke="#555" stroke-width="1.2"/><path d="M3.8 5.2 8 1" fill="none" stroke="#555" stroke-width="1.2"/><path d="M5 .4h3.6V4z" fill="#555"/></svg>
<div class="t gr" style="left:741px;top:462.7px;">リコール照会</div>
<div class="ab" style="left:391px;top:479.5px;width:5px;height:18.7px;border:1px solid #e9eae9;border-width:0 1px 1px 0"></div>
<div class="ab" style="left:396px;top:479.5px;width:27px;height:18.7px;border:1px solid #e9eae9;border-width:0 1px 1px 0"></div>
<div class="ab" style="left:423px;top:479.5px;width:111px;height:18.7px;border:1px solid #e9eae9;border-width:0 1px 1px 0"></div>
<div class="ab" style="left:534px;top:479.5px;width:74px;height:18.7px;border:1px solid #e9eae9;border-width:0 1px 1px 0"></div>
<div class="ab" style="left:608px;top:479.5px;width:74px;height:18.7px;border:1px solid #e9eae9;border-width:0 1px 1px 0"></div>
<div class="ab" style="left:682px;top:479.5px;width:103px;height:18.7px;border:1px solid #e9eae9;border-width:0 1px 1px 0"></div>
<div class="ab" style="left:785px;top:479.5px;width:116.5px;height:18.7px;border:1px solid #e9eae9;border-width:0 1px 1px 0"></div>
<div class="ab" style="left:901.5px;top:479.5px;width:102px;height:18.7px;border:1px solid #e9eae9;border-width:0 1px 1px 0"></div>
<div class="ab" style="left:391px;top:498.2px;width:5px;height:19.2px;border:1px solid #e9eae9;border-width:0 1px 1px 0"></div>
<div class="ab" style="left:396px;top:498.2px;width:27px;height:19.2px;border:1px solid #e9eae9;border-width:0 1px 1px 0"></div>
<div class="ab" style="left:423px;top:498.2px;width:111px;height:19.2px;border:1px solid #e9eae9;border-width:0 1px 1px 0"></div>
<div class="ab" style="left:534px;top:498.2px;width:148px;height:19.2px;border:1px solid #e9eae9;border-width:0 1px 1px 0"></div>
<div class="ab" style="left:682px;top:498.2px;width:103px;height:19.2px;border:1px solid #e9eae9;border-width:0 1px 1px 0"></div>
<div class="ab" style="left:785px;top:498.2px;width:116.5px;height:19.2px;border:1px solid #e9eae9;border-width:0 1px 1px 0"></div>
<div class="ab" style="left:901.5px;top:498.2px;width:102px;height:19.2px;border:1px solid #e9eae9;border-width:0 1px 1px 0"></div>
<div class="cb" style="left:397px;top:482.0px"></div>
<div class="t" style="left:426px;top:487.2px;">セルボ</div>
<div class="t" style="left:537px;top:487.2px;">平成<span class="l">30</span>年<span class="l">12</span>月</div>
<div class="t" style="left:611px;top:487.2px;"><span class="l">12</span>ヶ月</div>
<div class="t" style="left:686px;top:487.2px;">車検残<span class="l">30</span>日</div>
<svg class="ab" style="left:773px;top:483.8px" width="8" height="9" viewBox="0 0 8 9"><path d="M1.3 1.6h5.4a.8.8 0 0 1 .8.8v5.3a.8.8 0 0 1-.8.8H1.3a.8.8 0 0 1-.8-.8V2.4a.8.8 0 0 1 .8-.8z" fill="none" stroke="#d33" stroke-width="1"/><rect x=".5" y="1.6" width="7" height="1.6" fill="#d33"/><rect x="2" y=".3" width="1" height="1.8" fill="#d33"/><rect x="5" y=".3" width="1" height="1.8" fill="#d33"/><rect x="2" y="4.3" width="1.6" height="1.8" fill="#d33" opacity=".7"/><rect x="4.4" y="4.3" width="1.6" height="1.8" fill="#d33" opacity=".7"/></svg>
<div class="t" style="left:789px;top:487.2px;"><span class="l">-</span></div>
<div class="sel" style="left:905px;top:480.5px;width:95px;height:16.5px"><span style="font-size:8px">-</span><i></i></div>
<div class="t" style="left:426px;top:507.3px;">福井<span class="l">600</span>い<span class="l">1200</span></div>
<div class="t" style="left:537px;top:507.3px;"><span class="l">HG21S-9000000</span></div>
<div class="t" style="left:686px;top:507.3px;"><span class="l">DBA-HG21S</span></div>
<div class="t" style="left:789px;top:507.3px;"><span class="l">-</span></div>
<div class="t lk" style="left:562.4px;top:525.7px;">車両編集</div>
<div class="t lk" style="left:607.7px;top:525.7px;">整備作成</div>
<div class="t lk" style="left:655.5px;top:525.7px;">整備履歴<span class="l">2</span>件</div>
<svg class="ab" style="left:708px;top:522.3px" width="9" height="8" viewBox="0 0 9 8"><path d="M4.5 .6C6.6.6 8.4 1.8 8.4 3.4S6.6 6.2 4.5 6.2c-.6 0-1.1-.1-1.6-.3L1 7.3l.5-1.6C.9 5.1.6 4.3.6 3.4.6 1.8 2.4.6 4.5.6z" fill="none" stroke="#3d66ad" stroke-width="1"/></svg>
<svg class="ab" style="left:729.7px;top:521.4px" width="8.2" height="8.2" viewBox="0 0 9 9"><path d="M3.6 1.4H1.3a.6.6 0 0 0-.6.6v5.8c0 .3.3.6.6.6h5.8c.3 0 .6-.3.6-.6V5.4" fill="none" stroke="#3d66ad" stroke-width="1.2"/><path d="M3.8 5.2 8 1" fill="none" stroke="#3d66ad" stroke-width="1.2"/><path d="M5 .4h3.6V4z" fill="#3d66ad"/></svg>
<div class="t lk" style="left:741px;top:525.7px;">リコール照会</div>
<div class="ab" style="left:391px;top:542.5px;width:5px;height:18.7px;border:1px solid #e9eae9;border-width:0 1px 1px 0"></div>
<div class="ab" style="left:396px;top:542.5px;width:27px;height:18.7px;border:1px solid #e9eae9;border-width:0 1px 1px 0"></div>
<div class="ab" style="left:423px;top:542.5px;width:111px;height:18.7px;border:1px solid #e9eae9;border-width:0 1px 1px 0"></div>
<div class="ab" style="left:534px;top:542.5px;width:74px;height:18.7px;border:1px solid #e9eae9;border-width:0 1px 1px 0"></div>
<div class="ab" style="left:608px;top:542.5px;width:74px;height:18.7px;border:1px solid #e9eae9;border-width:0 1px 1px 0"></div>
<div class="ab" style="left:682px;top:542.5px;width:103px;height:18.7px;border:1px solid #e9eae9;border-width:0 1px 1px 0"></div>
<div class="ab" style="left:785px;top:542.5px;width:116.5px;height:18.7px;border:1px solid #e9eae9;border-width:0 1px 1px 0"></div>
<div class="ab" style="left:901.5px;top:542.5px;width:102px;height:18.7px;border:1px solid #e9eae9;border-width:0 1px 1px 0"></div>
<div class="ab" style="left:391px;top:561.2px;width:5px;height:19.2px;border:1px solid #e9eae9;border-width:0 1px 1px 0"></div>
<div class="ab" style="left:396px;top:561.2px;width:27px;height:19.2px;border:1px solid #e9eae9;border-width:0 1px 1px 0"></div>
<div class="ab" style="left:423px;top:561.2px;width:111px;height:19.2px;border:1px solid #e9eae9;border-width:0 1px 1px 0"></div>
<div class="ab" style="left:534px;top:561.2px;width:148px;height:19.2px;border:1px solid #e9eae9;border-width:0 1px 1px 0"></div>
<div class="ab" style="left:682px;top:561.2px;width:103px;height:19.2px;border:1px solid #e9eae9;border-width:0 1px 1px 0"></div>
<div class="ab" style="left:785px;top:561.2px;width:116.5px;height:19.2px;border:1px solid #e9eae9;border-width:0 1px 1px 0"></div>
<div class="ab" style="left:901.5px;top:561.2px;width:102px;height:19.2px;border:1px solid #e9eae9;border-width:0 1px 1px 0"></div>
<div class="cb" style="left:397px;top:545.0px"></div>
<div class="t" style="left:426px;top:550.2px;">セレナ</div>
<div class="t" style="left:537px;top:550.2px;">令和<span class="l">5</span>年<span class="l">3</span>月</div>
<div class="t" style="left:611px;top:550.2px;"><span class="l">12</span>ヶ月</div>
<div class="t" style="left:686px;top:550.2px;">車検残<span class="l">171</span>日</div>
<svg class="ab" style="left:773px;top:546.8px" width="8" height="9" viewBox="0 0 8 9"><path d="M1.3 1.6h5.4a.8.8 0 0 1 .8.8v5.3a.8.8 0 0 1-.8.8H1.3a.8.8 0 0 1-.8-.8V2.4a.8.8 0 0 1 .8-.8z" fill="none" stroke="#444" stroke-width="1"/><rect x=".5" y="1.6" width="7" height="1.6" fill="#444"/><rect x="2" y=".3" width="1" height="1.8" fill="#444"/><rect x="5" y=".3" width="1" height="1.8" fill="#444"/><rect x="2" y="4.3" width="1.6" height="1.8" fill="#444" opacity=".7"/><rect x="4.4" y="4.3" width="1.6" height="1.8" fill="#444" opacity=".7"/></svg>
<div class="t" style="left:789px;top:550.2px;"><span class="l">-</span></div>
<div class="sel" style="left:905px;top:543.5px;width:95px;height:16.5px"><span style="font-size:8px">-</span><i></i></div>
<div class="t" style="left:426px;top:570.3px;"></div>
<div class="t" style="left:537px;top:570.3px;"></div>
<div class="t" style="left:686px;top:570.3px;"></div>
<div class="t" style="left:789px;top:570.3px;"><span class="l">-</span></div>
<div class="ab" style="left:545px;top:385px;width:66.5px;height:31px;border:3px solid #e0412b"></div>
</body></html>
